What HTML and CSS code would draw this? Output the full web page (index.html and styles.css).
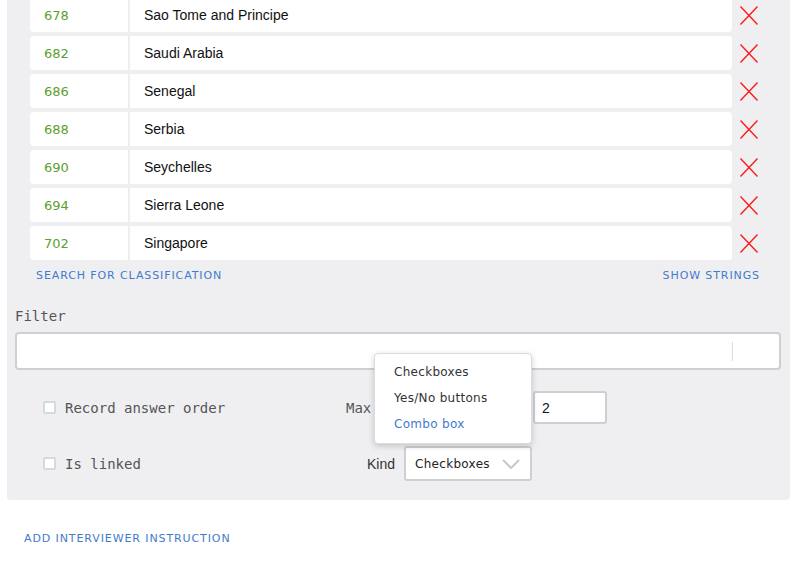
FILE: index.html
```html
<!DOCTYPE html>
<html lang="en">
<head>
<meta charset="utf-8">
<title>Categories</title>
<link rel="stylesheet" href="styles.css">
</head>
<body>
<div class="panel">
  <div class="rows">
    <div class="row"><div class="cell"><span class="code">678</span><span class="name">Sao Tome and Principe</span></div><span class="del"><svg viewBox="0 0 18 19" width="18" height="19"><path d="M0.5 0.5 L17.5 18.5 M17.5 0.5 L0.5 18.5"/></svg></span></div>
    <div class="row"><div class="cell"><span class="code">682</span><span class="name">Saudi Arabia</span></div><span class="del"><svg viewBox="0 0 18 19" width="18" height="19"><path d="M0.5 0.5 L17.5 18.5 M17.5 0.5 L0.5 18.5"/></svg></span></div>
    <div class="row"><div class="cell"><span class="code">686</span><span class="name">Senegal</span></div><span class="del"><svg viewBox="0 0 18 19" width="18" height="19"><path d="M0.5 0.5 L17.5 18.5 M17.5 0.5 L0.5 18.5"/></svg></span></div>
    <div class="row"><div class="cell"><span class="code">688</span><span class="name">Serbia</span></div><span class="del"><svg viewBox="0 0 18 19" width="18" height="19"><path d="M0.5 0.5 L17.5 18.5 M17.5 0.5 L0.5 18.5"/></svg></span></div>
    <div class="row"><div class="cell"><span class="code">690</span><span class="name">Seychelles</span></div><span class="del"><svg viewBox="0 0 18 19" width="18" height="19"><path d="M0.5 0.5 L17.5 18.5 M17.5 0.5 L0.5 18.5"/></svg></span></div>
    <div class="row"><div class="cell"><span class="code">694</span><span class="name">Sierra Leone</span></div><span class="del"><svg viewBox="0 0 18 19" width="18" height="19"><path d="M0.5 0.5 L17.5 18.5 M17.5 0.5 L0.5 18.5"/></svg></span></div>
    <div class="row"><div class="cell"><span class="code">702</span><span class="name">Singapore</span></div><span class="del"><svg viewBox="0 0 18 19" width="18" height="19"><path d="M0.5 0.5 L17.5 18.5 M17.5 0.5 L0.5 18.5"/></svg></span></div>
  </div>
  <div class="links">
    <a class="link">SEARCH FOR CLASSIFICATION</a>
    <a class="link">SHOW STRINGS</a>
  </div>
  <div class="field-label">Filter</div>
  <div class="filter">
    <span class="filter-field"></span>
    <span class="filter-sep"></span>
    <span class="filter-end"></span>
  </div>
  <div class="options">
    <div class="opt-row">
      <div class="check"><span class="box"></span><span>Record answer order</span></div>
      <span class="max-label">Max</span>
      <div class="num-input">2</div>
    </div>
    <div class="opt-row">
      <div class="check"><span class="box"></span><span>Is linked</span></div>
      <span class="kind-label">Kind</span>
      <div class="select">
        <span class="select-value">Checkboxes</span>
        <svg class="chevron" viewBox="0 0 18 10" width="18" height="10"><path d="M1 1 L9 9 L17 1"/></svg>
        <ul class="menu">
          <li class="menu-item">Checkboxes</li>
          <li class="menu-item">Yes/No buttons</li>
          <li class="menu-item active">Combo box</li>
        </ul>
      </div>
    </div>
  </div>
</div>
<a class="link add-link">ADD INTERVIEWER INSTRUCTION</a>
</body>
</html>
```

FILE: styles.css
```css
* { box-sizing: border-box; }

body {
  margin: 0;
  background: #ffffff;
  font-family: "Liberation Sans", Arial, sans-serif;
  color: #222;
}

.panel {
  margin-left: 7px;
  width: 783px;
  background: #efeff2;
  border-radius: 0 0 4px 4px;
  padding: 0 9px 19px 8px;
}

.rows {
  margin: -2px 23px 0 15px;
  display: flex;
  flex-direction: column;
  gap: 4px;
}

.row {
  display: flex;
  align-items: center;
  gap: 8px;
  height: 34px;
}

.cell {
  flex: 1;
  height: 34px;
  background: #ffffff;
  border-radius: 4px;
  display: flex;
  align-items: stretch;
}

.code {
  width: 100px;
  padding-left: 14px;
  border-right: 2px solid #eeeef0;
  display: flex;
  align-items: center;
  font-family: "DejaVu Sans", sans-serif;
  font-size: 13px;
  color: #5b9f2d;
}

.name {
  padding-left: 14px;
  display: flex;
  align-items: center;
  font-size: 14px;
  color: #111;
}

.del {
  width: 18px;
  height: 19px;
  display: flex;
}

.del svg path {
  stroke: #ff1a1a;
  stroke-width: 1.4;
  fill: none;
}

.links {
  display: flex;
  justify-content: space-between;
  margin: 9px 21px 0 21px;
  line-height: 14px;
}

.link {
  font-family: "DejaVu Sans", sans-serif;
  font-size: 11px;
  letter-spacing: 0.9px;
  color: #3f7bcc;
  text-decoration: none;
}

.field-label {
  margin-top: 25px;
  font-family: "DejaVu Sans Mono", monospace;
  font-size: 14px;
  line-height: 16px;
  color: #555;
}

.filter {
  margin-top: 8px;
  height: 38px;
  background: #fff;
  border: 2px solid #cfcfd2;
  border-radius: 4px;
  display: flex;
  align-items: center;
}

.filter-field { flex: 1; }

.filter-sep {
  width: 1px;
  height: 19px;
  background: #dcdcdc;
}

.filter-end { width: 46px; }

.options {
  margin-top: 21px;
  padding-left: 28px;
  display: flex;
  flex-direction: column;
  gap: 22px;
}

.opt-row {
  display: flex;
  align-items: center;
}

.check {
  width: 303px;
  display: flex;
  align-items: center;
  gap: 9px;
  font-family: "DejaVu Sans Mono", monospace;
  font-size: 14px;
  color: #555;
}

.box {
  width: 13px;
  height: 13px;
  background: #fff;
  border: 2px solid #d3dae2;
  border-radius: 2px;
}

.max-label {
  width: 187px;
  font-family: "DejaVu Sans Mono", monospace;
  font-size: 14px;
  color: #555;
  white-space: nowrap;
}

.num-input {
  width: 74px;
  height: 33px;
  background: #fff;
  border: 2px solid #cfcfd2;
  border-radius: 3px;
  padding-left: 7px;
  display: flex;
  align-items: center;
  font-size: 14px;
  color: #111;
}

.kind-label {
  width: 49px;
  margin-right: 9px;
  text-align: right;
  font-size: 14px;
  color: #333;
}

.select {
  position: relative;
  width: 128px;
  height: 35px;
  background: #fff;
  border: 2px solid #cfcfd2;
  border-radius: 3px;
  padding: 0 10px 0 9px;
  display: flex;
  align-items: center;
  justify-content: space-between;
  font-family: "DejaVu Sans", sans-serif;
  font-size: 12px;
  letter-spacing: 0.3px;
  color: #222;
}

.chevron path {
  stroke: #c9c9cc;
  stroke-width: 2;
  fill: none;
}

.menu {
  position: absolute;
  left: -32px;
  bottom: calc(100% + 4px);
  width: 158px;
  margin: 0;
  padding: 5px 0 6px;
  list-style: none;
  background: #fff;
  border: 1px solid #dcdcdf;
  border-radius: 4px;
  box-shadow: 0 2px 6px rgba(0, 0, 0, 0.18);
}

.menu-item {
  height: 26px;
  line-height: 26px;
  padding-left: 19px;
  color: #333;
}

.menu-item.active { color: #3f7bcc; }

.add-link {
  display: block;
  margin: 32px 0 0 24px;
  line-height: 14px;
}
```
